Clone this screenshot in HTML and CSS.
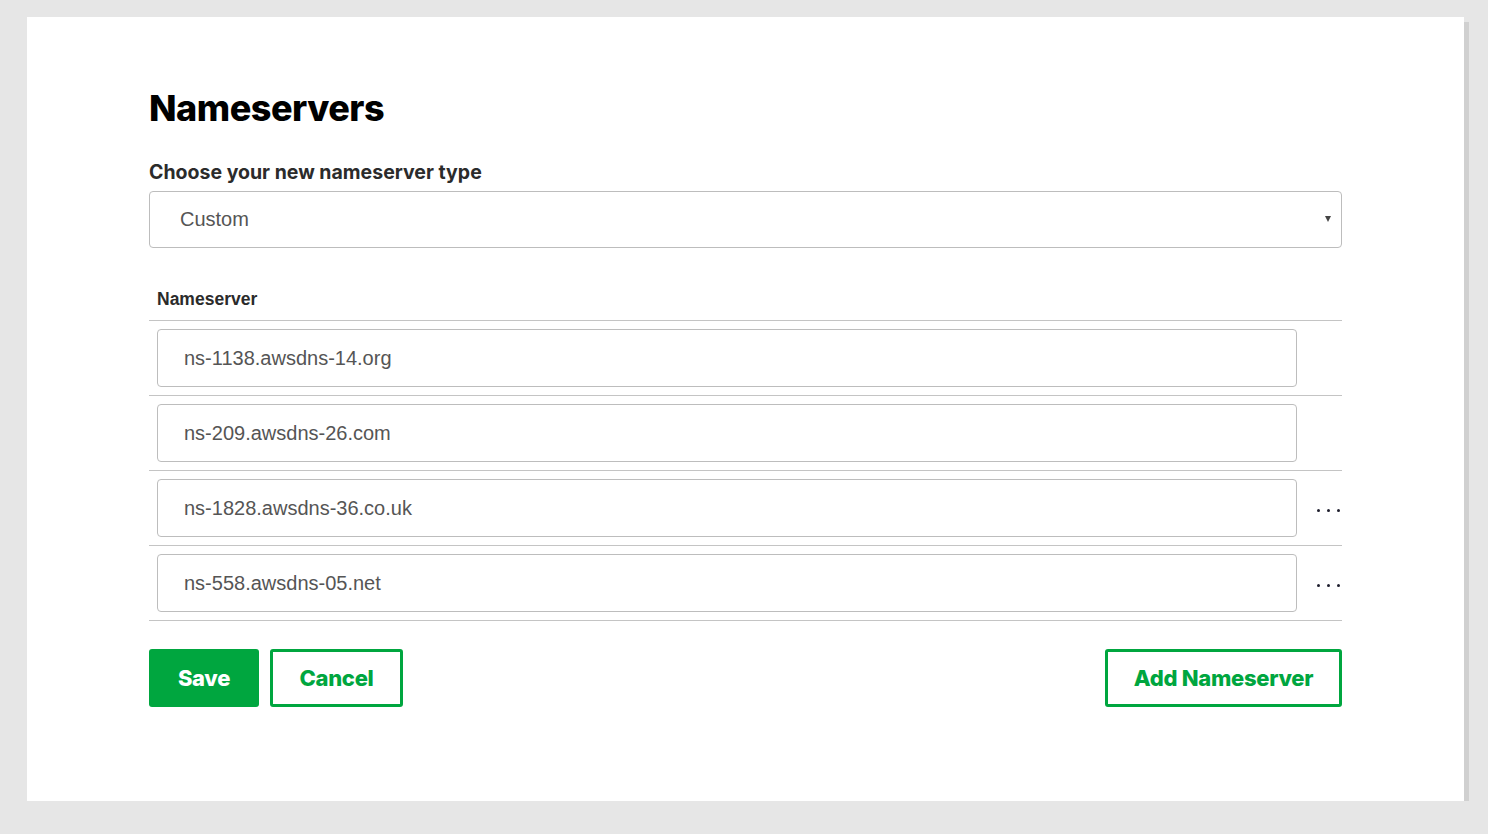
FILE: index.html
```html
<!DOCTYPE html>
<html>
<head>
<meta charset="utf-8">
<link rel="stylesheet" href="styles.css">
</head>
<body>
<div class="card">
  <h1 class="title">Nameservers</h1>
  <div class="field-label">Choose your new nameserver type</div>
  <div class="select">
    <span class="select-value">Custom</span>
    <span class="caret"></span>
  </div>
  <div class="table">
    <div class="table-head">Nameserver</div>
    <div class="row">
      <div class="input">ns-1138.awsdns-14.org</div>
      <div class="more"></div>
    </div>
    <div class="row">
      <div class="input">ns-209.awsdns-26.com</div>
      <div class="more"></div>
    </div>
    <div class="row">
      <div class="input">ns-1828.awsdns-36.co.uk</div>
      <div class="more"><span class="dot"></span><span class="dot"></span><span class="dot"></span></div>
    </div>
    <div class="row">
      <div class="input">ns-558.awsdns-05.net</div>
      <div class="more"><span class="dot"></span><span class="dot"></span><span class="dot"></span></div>
    </div>
  </div>
  <div class="actions">
    <div class="left-actions">
      <button class="btn btn-primary">Save</button>
      <button class="btn btn-outline">Cancel</button>
    </div>
    <button class="btn btn-outline btn-add">Add Nameserver</button>
  </div>
</div>
</body>
</html>
```
FILE: styles.css
```css
html, body {
  margin: 0;
  padding: 0;
  background: #e6e6e6;
}
body {
  padding: 17px 0 0 27px;
  font-family: "Liberation Sans", Arial, sans-serif;
}
.card {
  width: 1437px;
  height: 784px;
  box-sizing: border-box;
  background: #fff;
  box-shadow: 5px 5px 0 #d0d0d0;
  padding: 0 122px;
  display: flex;
  flex-direction: column;
}
.title {
  margin: 67px 0 0 0;
  font-family: Inter, "Open Sans", sans-serif;
  font-weight: 800;
  font-size: 36px;
  line-height: 48px;
  letter-spacing: -0.5px;
  color: #000;
}
.field-label {
  margin-top: 29px;
  font-family: Inter, "Open Sans", sans-serif;
  font-weight: 700;
  font-size: 19.5px;
  line-height: 22px;
  letter-spacing: 0;
  color: #2b2b2b;
}
.select {
  margin-top: 8px;
  height: 57px;
  box-sizing: border-box;
  border: 1px solid #bdbdbd;
  border-radius: 4px;
  display: flex;
  align-items: center;
  justify-content: space-between;
  padding: 0 10px 0 30px;
}
.select-value {
  font-size: 20px;
  color: #555;
}
.caret {
  width: 0;
  height: 0;
  border-left: 3.5px solid transparent;
  border-right: 3.5px solid transparent;
  border-top: 6px solid #444;
  margin-top: -2px;
}
.table {
  margin-top: 41px;
  display: flex;
  flex-direction: column;
}
.table-head {
  padding: 0 0 11px 8px;
  font-weight: 700;
  font-size: 17.5px;
  line-height: 20px;
  color: #2b2b2b;
  border-bottom: 1px solid #c4c4c4;
}
.row {
  display: flex;
  align-items: center;
  padding: 8px 0 8px 8px;
  border-bottom: 1px solid #c4c4c4;
}
.input {
  width: 1140px;
  height: 58px;
  box-sizing: border-box;
  border: 1px solid #bdbdbd;
  border-radius: 4px;
  padding: 0 26px;
  display: flex;
  align-items: center;
  font-size: 20px;
  color: #555;
}
.more {
  flex: 1;
  display: flex;
  justify-content: flex-end;
  gap: 7px;
  padding-top: 5px;
  padding-right: 2px;
}
.dot {
  width: 3px;
  height: 3px;
  border-radius: 50%;
  background: #1f1f2e;
}
.actions {
  margin-top: 28px;
  display: flex;
  justify-content: space-between;
}
.left-actions {
  display: flex;
  gap: 11px;
}
.btn {
  height: 58px;
  box-sizing: border-box;
  border-radius: 3px;
  font-family: Inter, "Open Sans", sans-serif;
  font-weight: 800;
  font-size: 22px;
  letter-spacing: -0.3px;
  cursor: pointer;
  padding: 0;
}
.btn-primary {
  width: 110px;
  background: #00a63f;
  border: 0;
  color: #fff;
}
.btn-outline {
  width: 133px;
  background: #fff;
  border: 3px solid #00a63f;
  color: #00a63f;
}
.btn-add {
  width: 237px;
}
```
